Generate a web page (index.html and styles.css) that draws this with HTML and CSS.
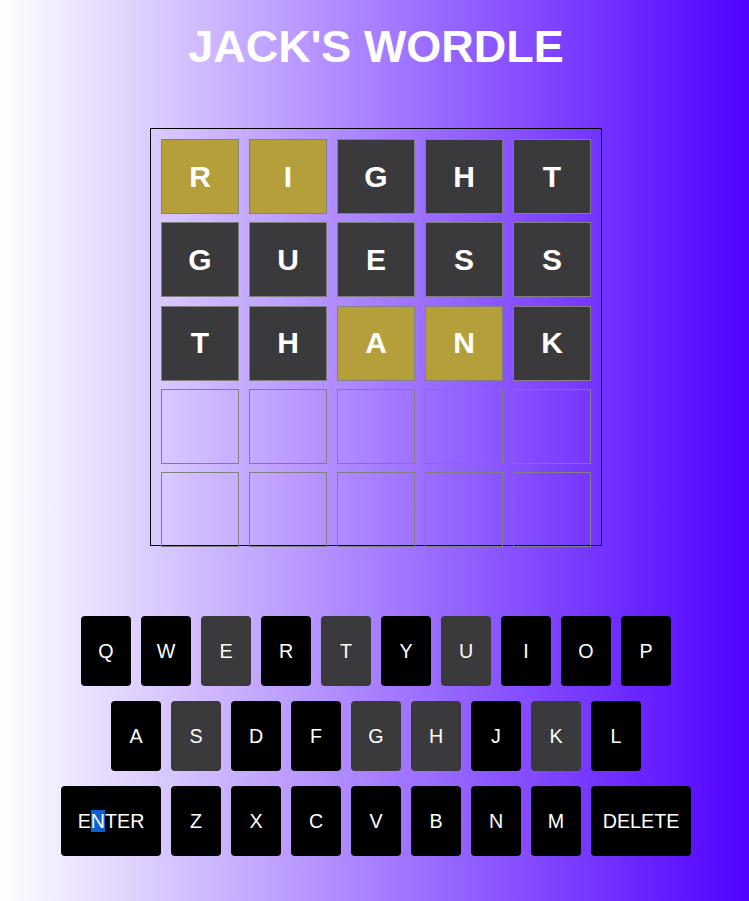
FILE: index.html
```html
<!DOCTYPE html>
<html lang="en">
<head>
<meta charset="utf-8">
<title>Jack's Wordle</title>
<link rel="stylesheet" href="styles.css">
</head>
<body>
<div class="app">
  <h1 class="title">JACK'S WORDLE</h1>
  <div class="board">
    <div class="tile present">R</div><div class="tile present">I</div><div class="tile absent">G</div><div class="tile absent">H</div><div class="tile absent">T</div>
    <div class="tile absent">G</div><div class="tile absent">U</div><div class="tile absent">E</div><div class="tile absent">S</div><div class="tile absent">S</div>
    <div class="tile absent">T</div><div class="tile absent">H</div><div class="tile present">A</div><div class="tile present">N</div><div class="tile absent">K</div>
    <div class="tile"></div><div class="tile"></div><div class="tile"></div><div class="tile"></div><div class="tile"></div>
    <div class="tile"></div><div class="tile"></div><div class="tile"></div><div class="tile"></div><div class="tile"></div>
  </div>
  <div class="keyboard">
    <div class="key-row">
      <div class="key">Q</div><div class="key">W</div><div class="key used">E</div><div class="key">R</div><div class="key used">T</div><div class="key">Y</div><div class="key used">U</div><div class="key">I</div><div class="key">O</div><div class="key">P</div>
    </div>
    <div class="key-row">
      <div class="key">A</div><div class="key used">S</div><div class="key">D</div><div class="key">F</div><div class="key used">G</div><div class="key used">H</div><div class="key">J</div><div class="key used">K</div><div class="key">L</div>
    </div>
    <div class="key-row">
      <div class="key wide">E<span class="sel">N</span>TER</div><div class="key">Z</div><div class="key">X</div><div class="key">C</div><div class="key">V</div><div class="key">B</div><div class="key">N</div><div class="key">M</div><div class="key wide">DELETE</div>
    </div>
  </div>
</div>
</body>
</html>
```
FILE: styles.css
```css
html, body {
  margin: 0;
  padding: 0;
}
body {
  width: 749px;
  height: 901px;
  overflow: hidden;
  background: linear-gradient(to right, #ffffff, #5000ff);
  font-family: "Liberation Sans", Arial, sans-serif;
}
.app {
  padding-left: 3px;
  display: flex;
  flex-direction: column;
  align-items: center;
}
.title {
  margin: 21px 0 0;
  font-size: 45px;
  line-height: 52px;
  font-weight: bold;
  color: #ffffff;
}
.board {
  margin-top: 55px;
  border: 1px solid #000;
  padding: 10px;
  width: 430px;
  height: 396px;
  display: grid;
  grid-template-columns: repeat(5, 78px);
  grid-template-rows: repeat(5, 75px);
  column-gap: 10px;
  row-gap: 8.25px;
}
.tile {
  box-sizing: border-box;
  border: 1px solid #808080;
  display: flex;
  align-items: center;
  justify-content: center;
  font-size: 30px;
  font-weight: bold;
  color: #fff;
}
.tile.present {
  background: #b59f3b;
}
.tile.absent {
  background: #3a3a3c;
}
.keyboard {
  margin-top: 70px;
  display: flex;
  flex-direction: column;
  align-items: center;
  gap: 15px;
}
.key-row {
  display: flex;
  gap: 10px;
}
.key {
  width: 50px;
  height: 70px;
  border-radius: 4px;
  background: #000;
  color: #fff;
  display: flex;
  align-items: center;
  justify-content: center;
  font-size: 19.7px;
}
.key.used {
  background: #3a3a3c;
}
.key.wide {
  width: 100px;
}
.sel {
  display: inline-block;
  background: #0a60d0;
  line-height: 22px;
}
```
